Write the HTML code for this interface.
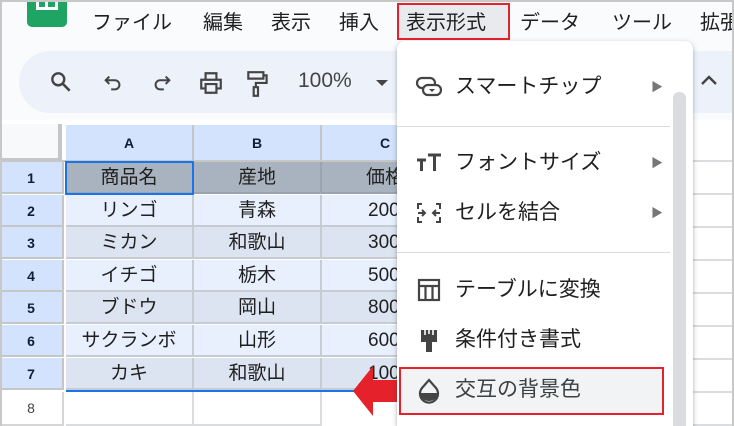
<!DOCTYPE html>
<html style="width:734px;height:426px;overflow:hidden"><head><meta charset="utf-8">
<style>
*{margin:0;padding:0;box-sizing:border-box}
body{width:734px;height:426px;overflow:hidden;background:#fff;font-family:"Liberation Sans","Noto Sans CJK JP",sans-serif;position:relative;color:#1f1f1f}
.a{position:absolute}
.menu-t{position:absolute;top:6px;font-size:20px;color:#1f1f1f;white-space:nowrap}
.cell{position:absolute;height:32px;font-size:19px;line-height:32px;text-align:center;border-right:2px solid #c7ccd3;border-bottom:2px solid #c7ccd3;white-space:nowrap;overflow:hidden}
.rh{position:absolute;left:0;width:64px;height:32px;background:#d3e3fd;font-size:14px;font-weight:bold;line-height:32px;text-align:center;border-right:2px solid #c4c7c5;border-bottom:2px solid #c4c7c5;color:#0b1f3a}
.mi{position:absolute;left:0;width:295px;height:46px;font-size:21px;line-height:46px;color:#1f1f1f}
.mi span{position:absolute;left:58px}
.mi svg{position:absolute;left:18px;top:11px}
.arr{position:absolute;left:254px;font-size:12px;color:#777}
</style></head><body>
<div class="a" style="left:0;top:0;width:734px;height:426px;border:2px solid #c8c8c8;border-bottom:none;z-index:50;pointer-events:none"></div>
<div class="a" style="left:0;top:0;width:734px;height:120px;background:#f9fbfd"></div>
<div class="a" style="left:27px;top:0;width:40px;height:27px;background:#1fa463;border-radius:0 0 5px 5px"></div>
<div class="a" style="left:36px;top:0;width:22px;height:10px;border:3px solid #fff;border-top:none"></div>
<div class="a" style="left:45px;top:0;width:3px;height:10px;background:#fff"></div>
<div class="menu-t" style="left:92px">ファイル</div>
<div class="menu-t" style="left:203px">編集</div>
<div class="menu-t" style="left:271px">表示</div>
<div class="menu-t" style="left:339px">挿入</div>
<div class="a" style="left:397px;top:3px;width:113px;height:37px;background:#e8eaed;border:2px solid #e5212b"></div>
<div class="menu-t" style="left:406px">表示形式</div>
<div class="menu-t" style="left:520px">データ</div>
<div class="menu-t" style="left:612px">ツール</div>
<div class="menu-t" style="left:700px">拡張</div>
<div class="a" style="left:19px;top:51px;width:715px;height:62px;background:#edf2fa;border-radius:31px 0 0 31px"></div>
<svg class="a" style="left:48px;top:69px" width="26" height="26" viewBox="0 0 24 24"><circle cx="9.5" cy="9.5" r="5.5" fill="none" stroke="#444" stroke-width="2.2"/><path d="M13.5 13.5L20 20" stroke="#444" stroke-width="2.4"/></svg>
<svg class="a" style="left:102px;top:72px" width="22" height="22" viewBox="0 0 24 24"><path d="M8 5L4 9l4 4M4 9h10a5 5 0 010 10h-4" fill="none" stroke="#444" stroke-width="2.2"/></svg>
<svg class="a" style="left:151px;top:72px" width="22" height="22" viewBox="0 0 24 24"><path d="M16 5l4 4-4 4M20 9H10a5 5 0 000 10h4" fill="none" stroke="#444" stroke-width="2.2"/></svg>
<svg class="a" style="left:198px;top:70px" width="26" height="26" viewBox="0 0 24 24"><path d="M7 8V3h10v5M7 17H3V9h18v8h-4M7 13h10v8H7z" fill="none" stroke="#444" stroke-width="2"/></svg>
<svg class="a" style="left:246px;top:70px" width="24" height="28" viewBox="0 0 22 26"><path d="M2 2h14v6H2zM16 5h3v7H9v4M7 16h4v8H7z" fill="none" stroke="#444" stroke-width="2"/></svg>
<div class="a" style="left:298px;top:69px;font-size:21px;color:#444">100%</div>
<div class="a" style="left:376px;top:80px;width:0;height:0;border-left:6px solid transparent;border-right:6px solid transparent;border-top:6px solid #444"></div>
<svg class="a" style="left:699px;top:72px" width="20" height="16" viewBox="0 0 20 16"><path d="M3 12l7-7 7 7" fill="none" stroke="#444" stroke-width="2.4"/></svg>
<div class="a" style="left:0;top:124px;width:734px;height:302px;background:#fff"></div>
<div class="a" style="left:0;top:124px;width:62px;height:38px;background:#f8f9fa;border-right:4px solid #c4c7c5;border-bottom:4px solid #c4c7c5"></div>
<div class="cell" style="left:66px;top:125px;width:128px;height:37px;line-height:36px;background:#d3e3fd;font-size:14px;font-weight:bold;color:#0b1f3a;border-color:#c4c7c5">A</div>
<div class="cell" style="left:194px;top:125px;width:128px;height:37px;line-height:36px;background:#d3e3fd;font-size:14px;font-weight:bold;color:#0b1f3a;border-color:#c4c7c5">B</div>
<div class="cell" style="left:322px;top:125px;width:128px;height:37px;line-height:36px;background:#d3e3fd;font-size:14px;font-weight:bold;color:#0b1f3a;border-color:#c4c7c5">C</div>
<div class="a" style="left:0;top:160px;width:734px;height:2px;background:#c4c7c5"></div>

<div class="rh" style="top:162px">1</div>
<div class="cell" style="left:66px;top:162px;width:128px;background:#a9b3bf;border-color:#9aa3ae">商品名</div>
<div class="cell" style="left:194px;top:162px;width:128px;background:#a9b3bf;border-color:#9aa3ae">産地</div>
<div class="cell" style="left:322px;top:162px;width:128px;background:#a9b3bf;border-color:#9aa3ae;text-align:left;padding-left:44px">価格</div>
<div class="a" style="left:65px;top:161px;width:129px;height:34px;border:2px solid #1a73e8"></div>

<div class="rh" style="top:195px">2</div>
<div class="cell" style="left:66px;top:195px;width:128px;background:#e8f0fe">リンゴ</div>
<div class="cell" style="left:194px;top:195px;width:128px;background:#e8f0fe">青森</div>
<div class="cell" style="left:322px;top:195px;width:128px;background:#e8f0fe;text-align:left;padding-left:46px">200</div>
<div class="rh" style="top:227px">3</div>
<div class="cell" style="left:66px;top:227px;width:128px;background:#dbe4f0">ミカン</div>
<div class="cell" style="left:194px;top:227px;width:128px;background:#dbe4f0">和歌山</div>
<div class="cell" style="left:322px;top:227px;width:128px;background:#dbe4f0;text-align:left;padding-left:46px">300</div>
<div class="rh" style="top:260px">4</div>
<div class="cell" style="left:66px;top:260px;width:128px;background:#e8f0fe">イチゴ</div>
<div class="cell" style="left:194px;top:260px;width:128px;background:#e8f0fe">栃木</div>
<div class="cell" style="left:322px;top:260px;width:128px;background:#e8f0fe;text-align:left;padding-left:46px">500</div>
<div class="rh" style="top:292px">5</div>
<div class="cell" style="left:66px;top:292px;width:128px;background:#dbe4f0">ブドウ</div>
<div class="cell" style="left:194px;top:292px;width:128px;background:#dbe4f0">岡山</div>
<div class="cell" style="left:322px;top:292px;width:128px;background:#dbe4f0;text-align:left;padding-left:46px">800</div>
<div class="rh" style="top:325px">6</div>
<div class="cell" style="left:66px;top:325px;width:128px;background:#e8f0fe">サクランボ</div>
<div class="cell" style="left:194px;top:325px;width:128px;background:#e8f0fe">山形</div>
<div class="cell" style="left:322px;top:325px;width:128px;background:#e8f0fe;text-align:left;padding-left:46px">600</div>
<div class="rh" style="top:358px">7</div>
<div class="cell" style="left:66px;top:358px;width:128px;background:#dbe4f0">カキ</div>
<div class="cell" style="left:194px;top:358px;width:128px;background:#dbe4f0">和歌山</div>
<div class="cell" style="left:322px;top:358px;width:128px;background:#dbe4f0;text-align:left;padding-left:46px">100</div>
<div class="a" style="left:66px;top:390px;width:340px;height:2px;background:#1a73e8"></div>
<div class="rh" style="top:392px;background:#fff;font-weight:normal;color:#444;border-color:#d6d6d6;height:34px">8</div>
<div class="cell" style="left:66px;top:392px;width:128px;height:34px;border-color:#dadce0"></div>
<div class="cell" style="left:194px;top:392px;width:128px;height:34px;border-color:#dadce0"></div>
<div class="a" style="left:692px;top:126px;width:42px;height:300px;background:repeating-linear-gradient(#fff 0 31px,#dadce0 31px 33px);background-position:0 3px"></div>
<svg class="a" style="left:353px;top:366px" width="44" height="50" viewBox="0 0 44 50"><path d="M0 25L20 0v14h24v22H20v14z" fill="#e5212b"/></svg>
<div class="a" style="left:397px;top:41px;width:296px;height:385px;background:#fff;border-radius:8px 8px 0 0;box-shadow:0 2px 6px rgba(60,64,67,.3),0 1px 2px rgba(60,64,67,.2);z-index:10;overflow:hidden">
 <div class="mi" style="top:23px"><svg width="28" height="24" viewBox="0 0 28 24"><rect x="2" y="3" width="18" height="10" rx="5" fill="none" stroke="#444" stroke-width="2.2"/><rect x="8" y="10" width="18" height="10" rx="5" fill="#fff" stroke="#444" stroke-width="2.2"/><path d="M14 14h6l-3 3z" fill="#444"/></svg><span>スマートチップ</span><div class="arr" style="top:0">▶</div></div>
 <div class="a" style="left:0;top:85px;width:273px;height:1px;background:#dadce0"></div>
 <div class="mi" style="top:99px"><svg width="28" height="24" viewBox="0 0 28 24"><path d="M2 9h9M6.5 9v11M13 4h13M19.5 4v16" stroke="#444" stroke-width="3" fill="none"/></svg><span>フォントサイズ</span><div class="arr">▶</div></div>
 <div class="mi" style="top:149px"><svg width="28" height="24" viewBox="0 0 28 24"><path d="M3 8V3h4M3 16v5h4M25 8V3h-4M25 16v5h-4M3 12h7M7 9l3 3-3 3M25 12h-7M21 9l-3 3 3 3" stroke="#444" stroke-width="2" fill="none"/></svg><span>セルを結合</span><div class="arr">▶</div></div>
 <div class="a" style="left:0;top:211px;width:273px;height:1px;background:#dadce0"></div>
 <div class="mi" style="top:226px"><svg width="28" height="24" viewBox="0 0 28 24"><rect x="4" y="2" width="20" height="20" fill="none" stroke="#444" stroke-width="2.2"/><path d="M4 8h20M10.5 8v14M17.5 8v14" stroke="#444" stroke-width="2.2"/></svg><span>テーブルに変換</span></div>
 <div class="mi" style="top:276px"><svg width="28" height="26" viewBox="0 0 28 26"><path d="M6 2h16v12H6z" fill="#444"/><path d="M10 2v5M14 2v4M18 2v5" stroke="#fff" stroke-width="1.6"/><rect x="11" y="14" width="6" height="10" fill="#444"/></svg><span>条件付き書式</span></div>
 <div class="a" style="left:2px;top:326px;width:265px;height:48px;background:#f1f3f4;border:2px solid #e5212b"></div>
 <div class="mi" style="top:326px"><svg width="28" height="26" viewBox="0 0 28 26"><path d="M14 2l7 8a9 9 0 11-14 0z" fill="none" stroke="#444" stroke-width="2.2"/><path d="M5 15h18a9 8 0 01-18 0z" fill="#444"/></svg><span style="color:#3c4043">交互の背景色</span></div>
 <div class="a" style="left:276px;top:51px;width:13px;height:334px;background:#dadce0;border-radius:6px 6px 0 0"></div>
</div>
</body></html>
